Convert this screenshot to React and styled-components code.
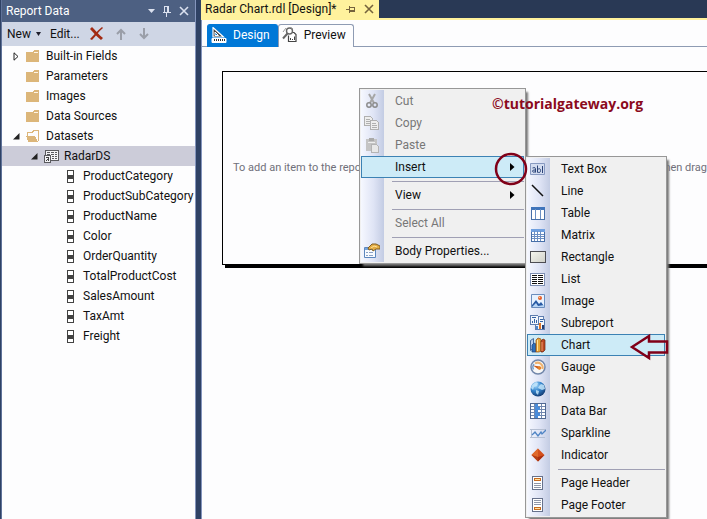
import React from "react";
import styled, { createGlobalStyle, css } from "styled-components";

const GlobalStyle = createGlobalStyle`
  * { box-sizing: border-box; }
  body { margin: 0; background: #2f4265; overflow: hidden; }
  body, button { font: 12px/20px Roboto, "Open Sans", sans-serif; color: #111; }
  button { border: 0; padding: 0; margin: 0; background: none; text-align: left; white-space: nowrap; }
  ul { list-style: none; margin: 0; padding: 0; }
  svg { display: block; flex: none; }
`;

const Window = styled.div`
  position: relative;
  display: flex;
  min-height: 100vh;
  overflow: hidden;
`;
const Panel = styled.aside`
  display: flex;
  flex-direction: column;
  flex: none;
  width: 195px;
  margin-left: 1px;
  border-left: 1px solid #5f7299;
  border-right: 1px solid #8495bd;
  background: #fdfdfe;
`;
const PanelTitle = styled.header`
  display: flex;
  align-items: center;
  gap: 8px;
  height: 22px;
  padding: 0 6px 0 4px;
  background: #4d6082;
  color: #fff;
  & > span { flex: 1; }
`;
const PanelTools = styled.div`
  display: flex;
  align-items: center;
  height: 24px;
  padding-left: 5px;
  background: #cfd6e5;
`;
const ToolButton = styled.button`
  display: flex;
  align-items: center;
  gap: 5px;
  margin-right: ${(p) => p.$after || 9}px;
`;
const IconButton = styled.button`
  display: flex;
`;
const Tree = styled.ul`
  overflow: hidden;
`;
const TreeRow = styled.li`
  display: flex;
  align-items: center;
  height: 20px;
  padding-left: ${(p) => [11, 29, 65][p.$level]}px;
  background: ${(p) => (p.$selected ? "#ccccd9" : "transparent")};
  white-space: nowrap;
`;
const Twisty = styled.span`
  display: flex;
  flex: none;
  width: 13px;
`;
const TreeIcon = styled.span`
  display: flex;
  flex: none;
  width: ${(p) => (p.$narrow ? 16 : 20)}px;
`;

const Workspace = styled.main`
  display: flex;
  flex-direction: column;
  flex: 1;
  min-width: 0;
  margin-left: 5px;
`;
const DocumentBar = styled.div`
  display: flex;
  height: 20px;
  border-bottom: 2px solid #fff29d;
  background: #293955;
`;
const DocumentTab = styled.div`
  display: flex;
  align-items: center;
  gap: 9px;
  height: 18px;
  padding: 0 5px 0 4px;
  background: #fff29d;
  white-space: nowrap;
`;
const Surface = styled.div`
  flex: 1;
  border-left: 1px solid #8495bd;
  background: #fdfdfe;
`;
const ViewTabs = styled.div`
  display: flex;
  height: 27px;
  padding: 4px 0 0 5px;
  box-shadow: inset 0 -1px #8e9bb3;
`;
const ViewTab = styled.button`
  display: flex;
  align-items: center;
  gap: 6px;
  height: 23px;
  padding: 0 7px 2px 3px;
  border: 1px solid #8e9bb3;
  border-bottom: 0;
  border-radius: 3px 3px 0 0;
  background: #fdfdfe;
  ${(p) =>
    p.$active &&
    css`
      background: #0078d7;
      border-color: #0078d7;
      color: #fff;
    `}
`;
const ReportBody = styled.section`
  display: flex;
  align-items: center;
  justify-content: space-between;
  height: 194px;
  margin: 24px 0 0 20px;
  padding: 0 0 0 10px;
  border: 1px solid #000;
  border-right: 0;
  box-shadow: 3px 3px #000;
  color: #70707a;
  font-size: 11px;
  white-space: nowrap;
`;

const Menu = styled.ul`
  position: absolute;
  left: ${(p) => p.$x}px;
  top: ${(p) => p.$y}px;
  width: ${(p) => p.$w}px;
  padding: 1px;
  border: 1px solid #979797;
  background: linear-gradient(90deg, #f6f8ff, #dfe4f5 55%, #c3cce3) 1px 1px / 23px calc(100% - 2px) no-repeat #f0f0f0;
  box-shadow: 3px 3px 2px -1px #777;
`;
const MenuItem = styled.button`
  display: flex;
  align-items: center;
  width: 100%;
  height: 22px;
  padding: 0 8px 0 2px;
  border: 1px solid transparent;
  color: #111;
  &:disabled { color: #777; }
  ${(p) =>
    p.$hot &&
    css`
      background: #cdebf7;
      border-color: #3c82b4;
    `}
`;
const MenuIcon = styled.span`
  display: flex;
  flex: none;
  width: 31px;
  height: 16px;
`;
const MenuLabel = styled.span`
  flex: 1;
`;
const MenuRule = styled.li`
  height: 6px;
  margin-left: 31px;
  background: linear-gradient(#a0a0b4, #a0a0b4) 0 3px / 100% 1px no-repeat;
`;
const Watermark = styled.strong`
  position: absolute;
  left: 492px;
  top: 94px;
  color: #8b0a1c;
  font: 700 14px/20px "Open Sans", "Noto Sans", sans-serif;
`;
const Callout = styled.svg`
  position: absolute;
  left: ${(p) => p.$x}px;
  top: ${(p) => p.$y}px;
  fill: none;
  stroke: #800018;
  stroke-width: 2.5;
  pointer-events: none;
`;

const Svg = ({ w = 16, h = 16, children, crisp }) => (
  <svg width={w} height={h} viewBox={`0 0 ${w} ${h}`} fill="none" shapeRendering={crisp ? "crispEdges" : "auto"} aria-hidden="true">
    {children}
  </svg>
);
const Down = ({ c = "#1e1e2c", w = 7 }) => (
  <Svg w={w} h={4}><path d={`M0 0h${w}L${w / 2} 4z`} fill={c} /></Svg>
);
const Pin = ({ c = "#dbe1ef" }) => (
  <Svg w={8} h={12} crisp><path d="M1.5 1v6M1 1.5h5M5.5 1v6M4.5 1v6M0 7.5h8M3.5 8v4" stroke={c} /></Svg>
);
const SidePin = () => (
  <Svg w={9} h={9} crisp><path d="M0 4.5h3M3.5 1v7M3 2.5h5M3 5.5h5M3 6.5h5M8.5 2v5" stroke="#75633d" /></Svg>
);
const Cross = ({ c, s = 10, t = 1.6 }) => (
  <Svg w={s} h={s}><path d={`M1 1L${s - 1} ${s - 1}M${s - 1} 1L1 ${s - 1}`} stroke={c} strokeWidth={t} /></Svg>
);
const Delete = () => (
  <Svg w={15} h={14}><path d="M1 2L3 0c3 3 7 8 11 11l-2 2C8 10 5 6 1 2z" fill="#a22a12" /><path d="M13 0l1 1C9 5 7 9 3 13l-2-1C5 8 8 4 13 0z" fill="#a22a12" /></Svg>
);
const Arrow = ({ down }) => (
  <Svg w={10} h={12}><path d={down ? "M5 0v10M1 6l4 4 4-4" : "M5 12V2M1 6l4-4 4 4"} stroke="#9a9ea8" strokeWidth="2" /></Svg>
);
const Folder = ({ open }) => (
  <Svg w={14} h={12} crisp>
    {open ? (
      <><path d="M1.5 9V2.5h5l1-2h5V11" stroke="#dcb67a" /><path d="M0 6h9l3 5.500H2z" fill="#dcb67a" /></>
    ) : (
      <><path d="M0 2h7l1-2h5v12H0z" fill="#dcb67a" /><path d="M8 2.500h4" stroke="#fff5e5" /></>
    )}
  </Svg>
);
const Closed = () => (<Svg w={6} h={9}><path d="M1 .8v7.400L5 4.500z" stroke="#222" /></Svg>);
const Opened = () => (<Svg w={7} h={7}><path d="M6.500 0v6.500H0z" fill="#222" /></Svg>);
const Dataset = () => (
  <Svg w={15} h={14} crisp>
    <path d="M1.500 6V1.500h13v10H7" stroke="#5a5a5e" fill="#f3f3f6" />
    <path d="M3 3.500h3M7 3.500h3M11 3.500h2M3 5.500h3M7 5.500h3M11 5.500h2M8 7.500h2M11 7.500h2M8 9.500h2M11 9.500h2" stroke="#5a5a5e" />
    <path d="M.5 6.500h6v7h-6z" fill="#f3f3f6" stroke="#5a5a5e" /><path d="M2 12l2.500-2.500M2 8.500h2.500v3" stroke="#424242" />
  </Svg>
);
const Field = () => (
  <Svg w={7} h={13} crisp><path d="M.5.5h6v12h-6z" fill="#fff" stroke="#424242" /><path d="M1 5h5v4H1z" fill="#424242" /></Svg>
);
const DesignIcon = () => (
  <Svg>
    <path d="M2 .5V10h10.500z" fill="#444" stroke="#fff" strokeWidth="1.200" /><path d="M4 5v3.500h3.500z" fill="#0078d7" stroke="#fff" />
    <path d="M1 11.500h14v4H1z" fill="#fff" stroke="#fff" /><path d="M3.500 12v2M5.500 12v2M7.500 12v2M9.500 12v2M11.500 12v2M13.500 12v2" stroke="#333" />
  </Svg>
);
const PreviewIcon = () => (
  <Svg>
    <path d="M10 5.500h2l2 2v7H6.500v-6" fill="#fff" stroke="#444" strokeWidth="1.200" />
    <circle cx="7.500" cy="4" r="3" fill="#fff" stroke="#666" strokeWidth="1.400" />
    <path d="M5.500 6.500L1 11.500" stroke="#666" strokeWidth="2" /><path d="M1 5l3-4M8 0l3 2" stroke="#999" />
    <path d="M8.500 11v2M10.500 12v1M12.500 9.500V13" stroke="#444" />
  </Svg>
);

const Grid = ({ x = [5.5, 10.5], y = [], top = "#3f74bb" }) => (
  <Svg crisp>
    <path d="M1.500 2.500h13v12h-13z" fill="#fff" stroke="#476fa8" />
    <path d="M1 2h14v3H1z" fill={top} />
    <path d={x.map((v) => `M${v} 4v10`).join("") + y.map((v) => `M2 ${v}h12`).join("")} stroke="#6b8fc3" />
  </Svg>
);
const PageIcon = ({ footer }) => (
  <Svg crisp>
    <path d="M2.500 1.500h10v13h-10z" fill="#fff" stroke="#66718c" />
    <path d={footer ? "M4 3.500h7M4 5.500h7M4 7.500h7" : "M4 8.500h7M4 10.500h7M4 12.500h7"} stroke="#8f96a8" />
    <path d={footer ? "M4.500 10.500h6v2h-6z" : "M4.500 3.500h6v2h-6z"} fill="#ffe0a0" stroke="#c76a1d" />
  </Svg>
);
const Doc = ({ x, y, c }) => (
  <><path d={`M${x}.5 ${y}.5h6l2 2v7h-8z`} fill="#eee" stroke={c} /><path d={`M${x + 2} ${y + 3}.5h4M${x + 2} ${y + 5}.5h5M${x + 2} ${y + 7}.5h5`} stroke={c} /></>
);

const icons = {
  cut: <Svg><path d="M5 1l5 9M11 1L6 10" stroke="#a6a6a6" strokeWidth="2" /><circle cx="5" cy="12" r="2.200" stroke="#8c8c8c" strokeWidth="1.500" /><circle cx="11" cy="12" r="2.200" stroke="#8c8c8c" strokeWidth="1.500" /></Svg>,
  copy: <Svg crisp><Doc x={0} y={1} c="#b0b0b0" /><Doc x={6} y={5} c="#b0b0b0" /></Svg>,
  paste: <Svg crisp><path d="M2 2h11v12H2z" fill="#c4c4c4" /><path d="M5 1h5v3H5z" fill="#aaa" /><path d="M4 5h7v1H4z" fill="#eee" /><path d="M7.500 7.500h5l2 2v6h-7z" fill="#e8e8e8" stroke="#b4b4b4" /></Svg>,
  props: (
    <Svg>
      <path d="M.5 4.500h11v10H.5z" fill="#f8fbff" stroke="#5c87be" /><path d="M1 5h8v2H1z" fill="#75a5df" />
      <path d="M2 9.500h2M5 9.500h4M2 12.500h2M5 12.500h4" stroke="#8ba2c5" />
      <path d="M4 5l4-4h4l4 2v3h-4L9 8 8 6 5 7z" fill="#e4ad45" stroke="#805f27" />
      <path d="M7 5l3-2 3 1" stroke="#ffe29a" />
    </Svg>
  ),
  text: (
    <Svg>
      <path d="M.5 2.500h14v11H.5z" fill="#d3dcf0" stroke="#8799c0" />
      <path d="M2.500 7q3-1.500 3 1v3.500M5.500 9q-3-.5-3 1.200t3 .6M7.500 4.500v7M7.500 8.500q3-2 3 1t-3 1.500M12.500 5v7" stroke="#2c4478" />
    </Svg>
  ),
  line: <Svg><path d="M2 2l11 11" stroke="#111" strokeWidth="1.500" /></Svg>,
  table: <Grid x={[5.500, 10.500]} />,
  matrix: <Grid x={[4.500, 7.500, 10.500]} y={[7.500, 9.500, 11.500]} top="#6fa0e0" />,
  rect: (
    <Svg crisp>
      <defs><linearGradient id="plate" x2="1" y2="1"><stop stopColor="#f6f6ef" /><stop offset="1" stopColor="#cfd0c8" /></linearGradient></defs>
      <path d="M.5 2.500h15v11H.5z" fill="url(#plate)" stroke="#4c4c52" />
    </Svg>
  ),
  list: <Svg crisp><path d="M.5 2.500h14v12H.5z" fill="#fff" stroke="#7d8fb3" /><path d="M2 4.500h5M8 4.500h5M2 6.500h5M8 6.500h5M2 8.500h5M8 8.500h5M2 10.500h5M8 10.500h5M2 12.500h5M8 12.500h5" stroke="#111" /></Svg>,
  image: (
    <Svg>
      <path d="M1.500 1.500h13v13h-13z" fill="#e8f2ff" stroke="#6b8dbd" />
      <path d="M2 12l4-5 3 4 2-2 3 4v1H2z" fill="#285aa4" /><path d="M2 14l4-4 2 3 6-1v2z" fill="#b9d6f5" /><circle cx="10" cy="5" r="2" fill="#e65c26" /><circle cx="9.500" cy="4.500" r=".8" fill="#ffd094" />
    </Svg>
  ),
  sub: (
    <Svg crisp>
      <path d="M8.500 1.500h5v3h1v10h-9v-5" fill="#f3f6fc" stroke="#5e7db0" />
      <path d="M.5.500h7l1 1v8h-8z" fill="#f3f6fc" stroke="#5e7db0" />
      <path d="M2 2.500h4M2.500 8V6M4.500 8V4M6.500 8V5M10 4.500h3M10 6.500h3" stroke="#3362a5" />
      <path d="M6 11h2v3H6z" fill="#4c87cf" /><path d="M9 8h2v6H9z" fill="#de7425" /><path d="M12 10h2v4h-2z" fill="#263e70" />
    </Svg>
  ),
  chart: (
    <Svg>
      <path d="M.5 3.500l3-2V11l-3 2.500z" fill="#b9cfec" stroke="#45699d" />
      <path d="M2 8l2-2 2 1v8H2z" fill="#2d70bd" stroke="#1c417d" strokeWidth=".7" />
      <path d="M6 3l2-2 3 1v12l-2 1H6z" fill="#e8a438" stroke="#8b4b16" strokeWidth=".7" /><path d="M7.500 3v11" stroke="#ffe29b" />
      <path d="M11 4l2-2 2 1v10l-2 2h-2z" fill="#bd4a23" stroke="#682512" strokeWidth=".7" /><path d="M12 5v9" stroke="#f2a06e" />
    </Svg>
  ),
  gauge: (
    <Svg>
      <circle cx="8" cy="8" r="7" fill="#f7f7f7" stroke="#7287aa" strokeWidth="1.500" />
      <path d="M3.500 10.500A5 5 0 014 5" stroke="#6f9fd2" strokeWidth="1.500" /><path d="M5 4.500A5 5 0 0112.500 10" stroke="#eeb26f" strokeWidth="2" />
      <path d="M3 6.500l7 1v3L8 10z" fill="#cc5b1c" /><circle cx="9.500" cy="9" r="1.800" fill="#e88124" />
    </Svg>
  ),
  map: (
    <Svg>
      <defs><radialGradient id="sea" cx=".35" cy=".25" r=".8"><stop stopColor="#a8dcff" /><stop offset=".5" stopColor="#3382ca" /><stop offset="1" stopColor="#12386e" /></radialGradient></defs>
      <circle cx="8" cy="8" r="7.500" fill="url(#sea)" />
      <path d="M2 4l4-3 2 1-1 3-3 1-1 3-2-2zM9 5l2-2 3 1 1 4-3 1-2-1-2-1zM6 9l3 1-1 4-2-2z" fill="#c2e4f9" opacity=".85" />
    </Svg>
  ),
  bar: (
    <Svg crisp>
      <path d="M.5.5h15v15H.5z" fill="#fff" stroke="#516992" /><path d="M1 3.500h14M1 6.500h14M1 9.500h14M1 12.500h14M4.500 1v14M11.500 1v14" stroke="#7187ae" />
      <path d="M5 1h3v3h2v3H8v3h2v3H8v2H5z" fill="#4a8cda" />
    </Svg>
  ),
  spark: <Svg><path d="M1.500 4v9M0 12.500h15M0 4.500h16" stroke="#b5bfd2" /><path d="M2 10l3-3 3 4 3-4 1 2 4-4" stroke="#4f84c4" strokeWidth="1.300" /></Svg>,
  ind: <Svg><path d="M8 1.500L14.500 8 8 14.500 1.500 8z" fill="#d4501c" /><path d="M8 1.500L1.500 8 8 10z" fill="#e06a2c" /><path d="M8 14.500L1.500 8 8 10z" fill="#b63f16" /><path d="M8 10l6.500-2L8 14.500z" fill="#a92f10" /></Svg>,
  header: <PageIcon />,
  footer: <PageIcon footer />,
};

const contextItems = [
  { label: "Cut", icon: "cut", disabled: true },
  { label: "Copy", icon: "copy", disabled: true },
  { label: "Paste", icon: "paste", disabled: true },
  { label: "Insert", hot: true, sub: true },
  null,
  { label: "View", sub: true },
  null,
  { label: "Select All", disabled: true },
  null,
  { label: "Body Properties...", icon: "props" },
];
const insertItems = [
  { label: "Text Box", icon: "text" },
  { label: "Line", icon: "line" },
  { label: "Table", icon: "table" },
  { label: "Matrix", icon: "matrix" },
  { label: "Rectangle", icon: "rect" },
  { label: "List", icon: "list" },
  { label: "Image", icon: "image" },
  { label: "Subreport", icon: "sub" },
  { label: "Chart", icon: "chart", hot: true },
  { label: "Gauge", icon: "gauge" },
  { label: "Map", icon: "map" },
  { label: "Data Bar", icon: "bar" },
  { label: "Sparkline", icon: "spark" },
  { label: "Indicator", icon: "ind" },
  null,
  { label: "Page Header", icon: "header" },
  { label: "Page Footer", icon: "footer" },
];
const PopupMenu = ({ items, label, ...place }) => (
  <Menu role="menu" aria-label={label} {...place}>
    {items.map((it, i) =>
      it ? (
        <li key={it.label} role="none">
          <MenuItem role="menuitem" $hot={it.hot} disabled={it.disabled} aria-haspopup={it.sub ? "menu" : undefined}>
            <MenuIcon>{icons[it.icon]}</MenuIcon>
            <MenuLabel>{it.label}</MenuLabel>
            {it.sub && <Svg w={5} h={8}><path d="M0 0v8l4.500-4z" fill="#000" /></Svg>}
          </MenuItem>
        </li>
      ) : (
        <MenuRule key={i} role="separator" />
      )
    )}
  </Menu>
);

const fields = ["ProductCategory", "ProductSubCategory", "ProductName", "Color", "OrderQuantity", "TotalProductCost", "SalesAmount", "TaxAmt", "Freight"];

export default function App() {
  return (
    <>
      <GlobalStyle />
      <Window>
        <Panel>
          <PanelTitle>
            <span>Report Data</span>
            <IconButton aria-label="Window options"><Down c="#dbe1ef" /></IconButton>
            <IconButton aria-label="Pin panel"><Pin /></IconButton>
            <IconButton aria-label="Close panel"><Cross c="#dbe1ef" /></IconButton>
          </PanelTitle>
          <PanelTools>
            <ToolButton>New <Down w={5} /></ToolButton>
            <ToolButton>Edit...</ToolButton>
            <ToolButton $after={12} aria-label="Delete"><Delete /></ToolButton>
            <ToolButton $after={13} aria-label="Move up"><Arrow /></ToolButton>
            <ToolButton aria-label="Move down"><Arrow down /></ToolButton>
          </PanelTools>
          <Tree role="tree" aria-label="Report Data">
            {["Built-in Fields", "Parameters", "Images", "Data Sources", "Datasets"].map((name, i) => (
              <TreeRow key={name} role="treeitem" $level={0}>
                <Twisty>{i === 0 ? <Closed /> : i === 4 ? <Opened /> : null}</Twisty>
                <TreeIcon><Folder open={i === 4} /></TreeIcon>
                {name}
              </TreeRow>
            ))}
            <TreeRow role="treeitem" aria-selected="true" $level={1} $selected>
              <Twisty><Opened /></Twisty>
              <TreeIcon><Dataset /></TreeIcon>
              RadarDS
            </TreeRow>
            {fields.map((name) => (
              <TreeRow key={name} role="treeitem" $level={2}>
                <TreeIcon $narrow><Field /></TreeIcon>
                {name}
              </TreeRow>
            ))}
          </Tree>
        </Panel>
        <Workspace>
          <DocumentBar>
            <DocumentTab>
              <span>Radar Chart.rdl [Design]*</span>
              <IconButton aria-label="Pin tab"><SidePin /></IconButton>
              <IconButton aria-label="Close tab"><Cross c="#75633d" /></IconButton>
            </DocumentTab>
          </DocumentBar>
          <Surface>
            <ViewTabs role="tablist">
              <ViewTab role="tab" aria-selected="true" $active><DesignIcon />Design</ViewTab>
              <ViewTab role="tab" aria-selected="false"><PreviewIcon />Preview</ViewTab>
            </ViewTabs>
            <ReportBody>
              <span>To add an item to the report</span>
              <span>then drag</span>
            </ReportBody>
          </Surface>
        </Workspace>
        <PopupMenu items={contextItems} label="Report body" $x={359} $y={88} $w={167} />
        <PopupMenu items={insertItems} label="Insert" $x={525} $y={156} $w={142} />
        <Watermark>©tutorialgateway.org</Watermark>
        <Callout $x={494} $y={152} width="34" height="34"><circle cx="17" cy="17" r="15" /></Callout>
        <Callout $x={629} $y={332} width="42" height="30"><path d="M3 15L20 4v5.500h18v11H20V26z" /></Callout>
      </Window>
    </>
  );
}
